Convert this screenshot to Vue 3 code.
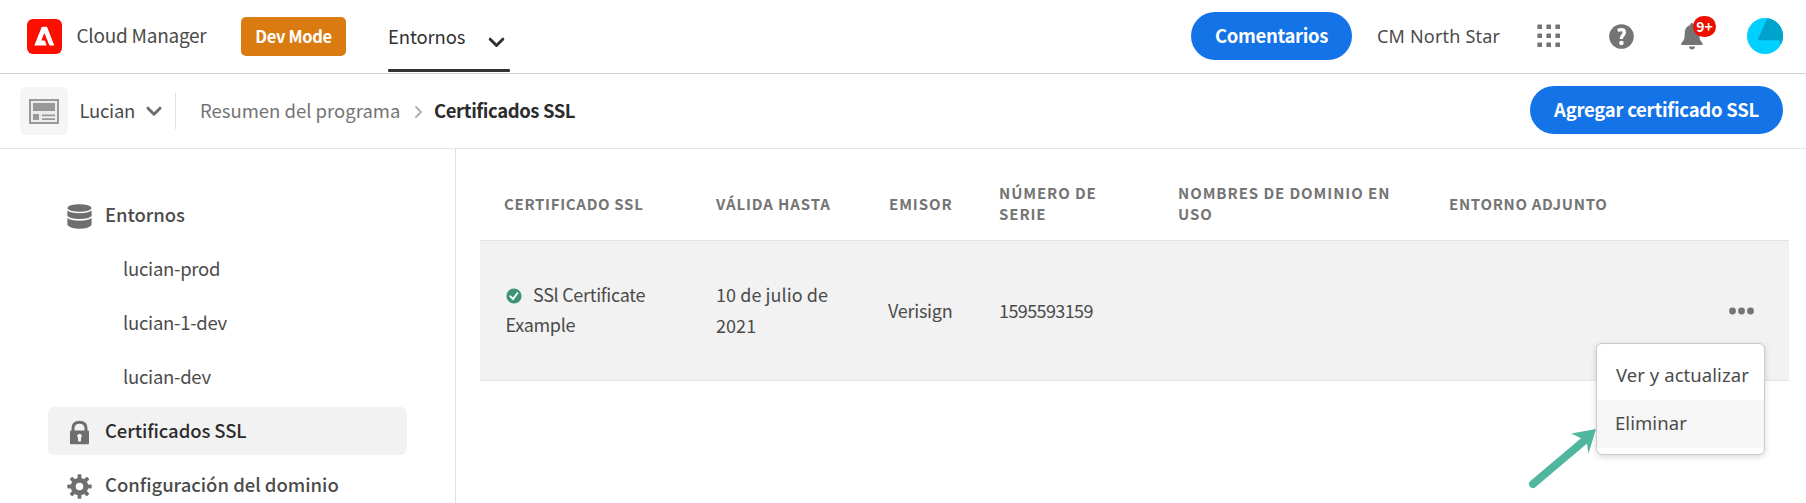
<script setup>
const environments = ['lucian-prod', 'lucian-1-dev', 'lucian-dev']
const gearTeeth = [0, 45, 90, 135, 180, 225, 270, 315]
const gridDots = [0, 9, 18]
</script>

<template>
  <div class="app">
    <header class="topbar">
      <svg class="logo" width="35" height="35" viewBox="0 0 35 35">
        <rect width="35" height="35" rx="6" fill="#fa0f00" />
        <path fill="#fff" d="M15.400 7.700H19.400Q20 7.700 20.300 8.400L27.300 26.500H23.200Q22.400 26.500 22.100 25.700L17.400 14 14.300 21.500H17.200Q17.800 21.500 18 22L19.500 25.700Q19.700 26.500 19 26.500H7.300L14.500 8.400Q14.800 7.700 15.400 7.700z" />
      </svg>
      <span class="product">Cloud Manager</span>
      <span class="devmode">Dev Mode</span>
      <nav class="tab">
        <span class="tab-label">Entornos</span>
        <svg class="tab-chevron" width="17" height="11" viewBox="0 0 17 11"><path d="M2.2 2.2 8.5 8.5 14.8 2.2" fill="none" stroke="#323232" stroke-width="3" stroke-linecap="round" stroke-linejoin="round" /></svg>
      </nav>
      <button class="pill feedback">Comentarios</button>
      <span class="org">CM North Star</span>
      <svg class="apps" width="24" height="24" viewBox="0 0 24 24">
        <template v-for="y in gridDots" :key="y">
          <rect v-for="x in gridDots" :key="x" :x="x + 0.4" :y="y + 0.4" width="4.6" height="4.6" rx=".6" fill="#747474" />
        </template>
      </svg>
      <svg class="help" width="25" height="25" viewBox="0 0 25 25">
        <circle cx="12.5" cy="12.5" r="12.3" fill="#747474" />
        <path d="M8.700 6.300Q15.400 4.200 15.300 8.400C15.200 11.200 12.200 11.300 12.300 15" fill="none" stroke="#fff" stroke-width="3.400" />
        <circle cx="12.4" cy="19" r="2.3" fill="#fff" />
      </svg>
      <div class="bell">
        <svg width="22" height="27" viewBox="0 0 22 27">
          <path fill="#747474" d="M11 0Q13 0 13 2.2C17 3.4 18.3 6.8 18.3 11 18.3 16 19.5 18 21.5 20V22H.3V20C2.6 18 3.7 16 3.7 11 3.7 6.8 5 3.4 9 2.2Q9 0 11 0zM7.8 23.4H14.2Q13.5 26.4 11 26.4T7.8 23.4z" />
        </svg>
        <span class="badge">9+</span>
      </div>
      <svg class="avatar" width="36" height="36" viewBox="0 0 36 36">
        <circle cx="18" cy="18" r="18" fill="#00d0ff" />
        <path fill="#00a3cc" d="M20.2.2A18 18 0 0 1 34.2 26L32 22.2H10.5z" />
      </svg>
    </header>

    <div class="subbar">
      <div class="program-icon">
        <svg width="30" height="25" viewBox="0 0 30 25">
          <rect x="1" y="1" width="28" height="23" fill="#ececec" stroke="#999" stroke-width="2" />
          <path fill="#999" d="M4 4h22v8H4zM4 15h6v6H4zM13 15.5h13v1.7H13zM13 19.3h13V21H13z" />
        </svg>
      </div>
      <span class="program">Lucian</span>
      <svg class="program-chevron" width="16" height="11" viewBox="0 0 16 11"><path d="M2 2.2 8 8.2 14 2.2" fill="none" stroke="#6e6e6e" stroke-width="3" stroke-linecap="round" stroke-linejoin="round" /></svg>
      <span class="divider"></span>
      <span class="crumb">Resumen del programa</span>
      <svg class="crumb-chevron" width="9" height="14" viewBox="0 0 9 14"><path d="M2 2 7 7 2 12" fill="none" stroke="#b0b0b0" stroke-width="2" stroke-linecap="round" stroke-linejoin="round" /></svg>
      <span class="current">Certificados SSL</span>
      <button class="pill add">Agregar certificado SSL</button>
    </div>

    <div class="body">
      <aside class="sidebar">
        <div class="item">
          <svg class="icon" width="25" height="25" viewBox="0 0 25 25" fill="#6e6e6e">
            <ellipse cx="12.5" cy="4" rx="12" ry="3.8" />
            <path d="M.4 6.5Q4 9.3 12.5 9.3T24.6 6.5V12Q22 15 12.5 15T.4 12zM.4 14Q4 16.8 12.5 16.8T24.6 14V21Q22 24.7 12.5 24.7T.4 21z" />
          </svg>
          <span class="label">Entornos</span>
        </div>
        <div v-for="env in environments" :key="env" class="item child">{{ env }}</div>
        <div class="item selected">
          <svg class="icon" width="25" height="25" viewBox="0 0 25 25">
            <path d="M6 11V8.5Q6 2.3 12.5 2.3T19 8.5V11" fill="none" stroke="#6e6e6e" stroke-width="3" />
            <path fill="#6e6e6e" fill-rule="evenodd" d="M4 10.5h17q1 0 1 1V23.2q0 1-1 1H4q-1 0-1-1V11.500q0-1 1-1zM12.500 13.700a2.400 2.400 0 0 0-1.500 4.200V21.500h3v-3.600a2.400 2.400 0 0 0-1.500-4.200z" />
          </svg>
          <span class="label">Certificados SSL</span>
        </div>
        <div class="item">
          <svg class="icon" width="25" height="25" viewBox="0 0 25 25">
            <circle cx="12.500" cy="12.500" r="6.300" fill="none" stroke="#6e6e6e" stroke-width="5" />
            <rect v-for="a in gearTeeth" :key="a" x="10.600" y=".3" width="3.800" height="6" rx="1" fill="#6e6e6e" :transform="`rotate(${a} 12.5 12.5)`" />
          </svg>
          <span class="label domain">Configuración del dominio</span>
        </div>
      </aside>

      <main class="content">
        <div class="row head">
          <span>CERTIFICADO SSL</span>
          <span class="wide">VÁLIDA HASTA</span>
          <span class="wide issuer">EMISOR</span>
          <span class="wide raised">NÚMERO DE<br />SERIE</span>
          <span class="domains raised">NOMBRES DE DOMINIO EN USO</span>
          <span>ENTORNO ADJUNTO</span>
        </div>
        <div class="row data">
          <span class="name">
            <svg class="check" width="16" height="16" viewBox="0 0 16 16"><circle cx="8" cy="8" r="7.600" fill="#3d9474" /><path d="M4.400 8.300 7 11 11.300 5.200" fill="none" stroke="#fff" stroke-width="1.900" stroke-linecap="round" /></svg>SSl Certificate<br />Example
          </span>
          <span class="date">10 de julio de<br />2021</span>
          <span class="verisign">Verisign</span>
          <span class="serial">1595593159</span>
          <span></span>
          <span></span>
          <svg class="more" width="26" height="8" viewBox="0 0 26 8" fill="#747474"><circle cx="3.500" cy="4" r="3.400" /><circle cx="12.500" cy="4" r="3.400" /><circle cx="21.500" cy="4" r="3.400" /></svg>
        </div>
      </main>
    </div>

    <div class="menu">
      <div class="option">Ver y actualizar</div>
      <div class="option active">Eliminar</div>
    </div>
    <svg class="arrow" width="72" height="64" viewBox="0 0 72 64">
      <path d="M6 57 57.500 13.500" stroke="#50b6a0" stroke-width="8" stroke-linecap="round" />
      <path fill="#50b6a0" d="M69 2 44.300 6.600 53.500 11 60 17 61.500 26.500z" />
    </svg>
  </div>
</template>

<style>
body {
  overflow: hidden;
}
</style>

<style scoped>
.app {
  position: relative;
  height: 503px;
  overflow: hidden;
  background: #fff;
  color: #4b4b4b;
  font: 18.5px/24px 'Noto Sans CJK SC', sans-serif;
  white-space: nowrap;
}
svg {
  display: block;
  flex: none;
}
.topbar {
  box-sizing: border-box;
  height: 74px;
  display: flex;
  align-items: center;
  padding: 0 23px 0 27px;
  border-bottom: 1px solid #d0d0d0;
}
.product {
  margin-left: 14.5px;
  width: 132px;
  padding-bottom: 3px;
  font-size: 19px;
  letter-spacing: -0.26px;
}
.logo {
  margin-bottom: 1px;
}
.devmode {
  box-sizing: border-box;
  width: 105px;
  height: 39px;
  margin-left: 32.5px;
  border-radius: 5px;
  background: #da7b11;
  color: #fff;
  font-size: 16.5px;
  font-weight: 700;
  line-height: 38px;
  text-align: center;
  letter-spacing: -0.35px;
}
.tab {
  box-sizing: border-box;
  position: relative;
  width: 122px;
  height: 73px;
  margin-left: 42px;
  display: flex;
  align-items: center;
  color: #323232;
}
.tab::after {
  content: '';
  position: absolute;
  left: 0;
  right: 0;
  bottom: 1px;
  height: 3px;
  border-radius: 1px;
  background: #323232;
}
.tab-label {
  width: 100px;
  letter-spacing: -0.15px;
  padding-bottom: 2px;
}
.tab-chevron {
  margin-top: 12px;
}
.pill {
  height: 48px;
  padding: 0;
  border: 0;
  border-radius: 24px;
  background: #1473e6;
  color: #fff;
  font: inherit;
  font-weight: 700;
}
.feedback {
  width: 161px;
  margin-left: auto;
  margin-bottom: 1px;
  padding-bottom: 3px;
  letter-spacing: -0.35px;
}
.org {
  width: 160px;
  margin-left: 25px;
  font-family: 'Noto Sans', sans-serif;
  font-size: 18px;
  letter-spacing: 0.2px;
  padding-bottom: 1px;
}
.apps {
  margin-bottom: 2px;
}
.help {
  margin-left: 48px;
}
.bell {
  position: relative;
  margin-left: 47px;
  margin-right: 44px;
}
.badge {
  position: absolute;
  left: 12px;
  top: -7px;
  width: 23px;
  height: 21px;
  border-radius: 11px;
  background: #eb1000;
  color: #fff;
  font-size: 14px;
  font-weight: 700;
  line-height: 20px;
  text-align: center;
}
.avatar {
  margin-bottom: 1px;
}
.subbar {
  box-sizing: border-box;
  height: 75px;
  display: flex;
  align-items: center;
  padding: 0 23px 0 20px;
  border-bottom: 1px solid #e6e6e6;
}
.program-icon {
  width: 48px;
  height: 48px;
  border-radius: 6px;
  background: #f5f5f5;
  display: flex;
  align-items: center;
  justify-content: center;
}
.program {
  width: 66px;
  margin-left: 11.5px;
  padding-bottom: 3px;
  letter-spacing: -0.3px;
}
.divider {
  width: 1px;
  height: 36px;
  margin-left: 13.5px;
  background: #e1e1e1;
}
.crumb {
  width: 200px;
  margin-left: 24px;
  padding-bottom: 3px;
  color: #747474;
}
.crumb-chevron {
  margin-left: 13.5px;
  margin-top: 2px;
}
.current {
  margin-left: 11.5px;
  padding-bottom: 3px;
  color: #2c2c2c;
  font-weight: 700;
  letter-spacing: -0.4px;
}
.add {
  width: 253px;
  margin-left: auto;
  margin-bottom: 2px;
  padding-bottom: 2px;
  letter-spacing: -0.25px;
}
.body {
  display: flex;
  height: 354px;
}
.sidebar {
  box-sizing: border-box;
  flex: none;
  width: 456px;
  padding: 42px 48px 0;
  border-right: 1px solid #e1e1e1;
}
.item {
  box-sizing: border-box;
  height: 48px;
  margin-bottom: 6px;
  padding-left: 19px;
  border-radius: 6px;
  display: flex;
  align-items: center;
  font-weight: 500;
}
.item .icon {
  margin-top: 2px;
}
.label {
  margin-left: 13px;
  padding-bottom: 3px;
  letter-spacing: -0.08px;
}
.domain {
  letter-spacing: -0.02px;
}
.child {
  padding: 0 0 3px 75px;
  font-weight: 400;
  letter-spacing: -0.28px;
}
.selected {
  background: #f2f2f2;
  color: #2c2c2c;
}
.content {
  flex: 1;
  padding: 0 17px 0 24px;
}
.row {
  box-sizing: border-box;
  display: grid;
  grid-template-columns: 212px 172px 111px 180px 270px 1fr 60px;
  align-items: center;
  padding-left: 24px;
}
.head {
  height: 91px;
  padding-top: 18px;
  color: #747474;
  font-size: 15px;
  font-weight: 700;
  line-height: 21px;
  letter-spacing: 0.68px;
}
.wide {
  letter-spacing: 0.9px;
}
.issuer {
  padding-left: 1px;
}
.raised {
  padding-bottom: 2px;
}
.domains {
  width: 230px;
  margin-left: -1px;
  white-space: normal;
  letter-spacing: 0.92px;
}
.data {
  height: 141px;
  border-top: 1px solid #e4e4e4;
  border-bottom: 1px solid #e4e4e4;
  background: #f2f2f2;
  font-size: 18px;
  line-height: 31px;
}
.name {
  padding-left: 1.5px;
  padding-bottom: 3px;
  line-height: 30.5px;
  letter-spacing: -0.3px;
}
.check {
  display: inline-block;
  margin-right: 11.5px;
  vertical-align: -2.5px;
}
.date {
  padding-bottom: 2px;
  letter-spacing: 0.06px;
}
.serial {
  letter-spacing: -0.6px;
}
.verisign {
  letter-spacing: -0.25px;
}
.more {
  margin-top: 1px;
}
.menu {
  position: absolute;
  box-sizing: border-box;
  left: 1596px;
  top: 343px;
  width: 169px;
  height: 112px;
  padding-top: 8px;
  border: 1px solid #cacaca;
  border-radius: 6px;
  background: #fff;
  box-shadow: 0 2px 6px rgba(0, 0, 0, 0.15);
  font-family: 'Noto Sans', sans-serif;
}
.option {
  height: 48px;
  padding-left: 19px;
  line-height: 46px;
  letter-spacing: 0.06px;
}
.active {
  padding-left: 18px;
  background: #f6f6f6;
}
.arrow {
  position: absolute;
  left: 1527px;
  top: 427px;
}
</style>
